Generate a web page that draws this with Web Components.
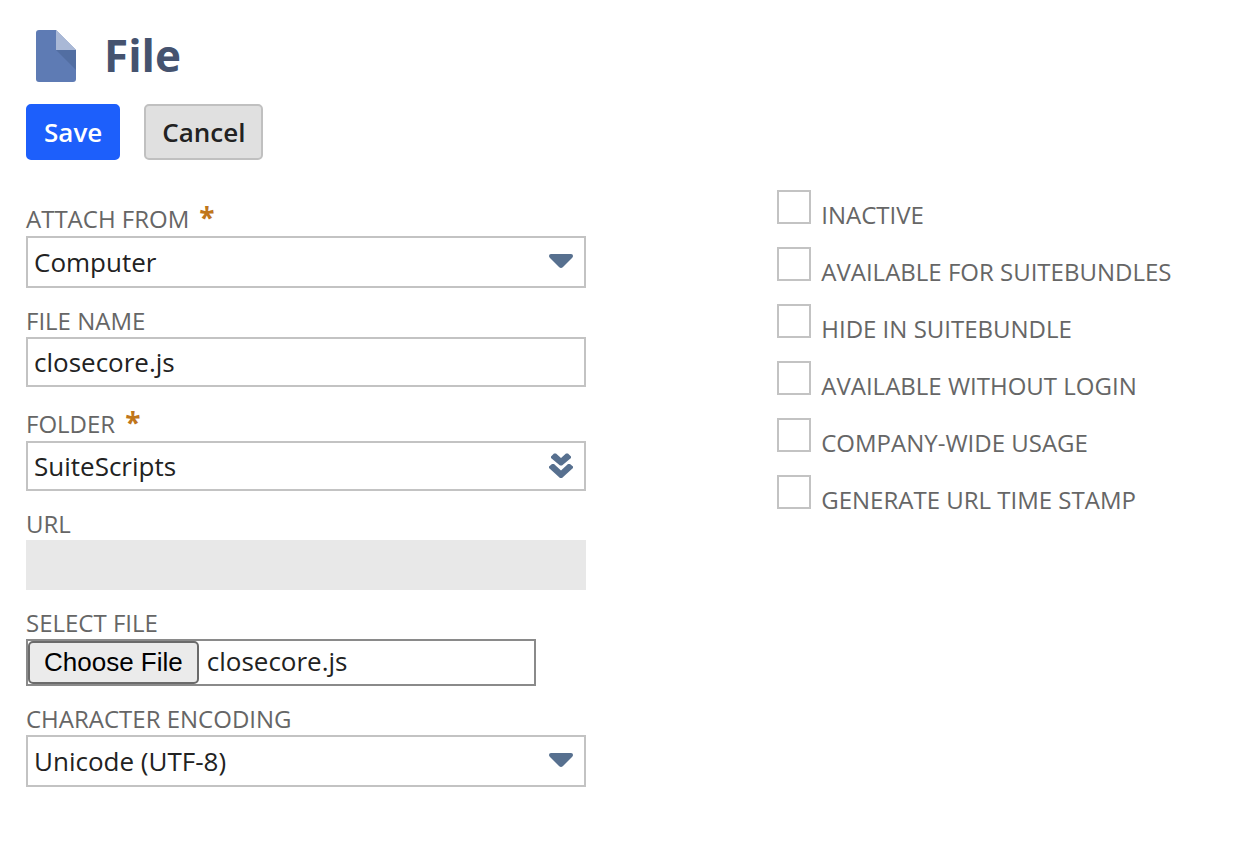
<!DOCTYPE html>
<html lang="en">
<head>
<meta charset="utf-8">
<meta name="viewport" content="width=device-width, initial-scale=1">
<title>File</title>
<style>
  body {
    margin: 0;
    background: #fff;
    font-family: "Open Sans", "Noto Sans", sans-serif;
    color: #222;
  }
</style>
</head>
<body>
<file-page>
  <page-title slot="title">File</page-title>
  <action-button slot="actions" kind="primary">Save</action-button>
  <action-button slot="actions">Cancel</action-button>

  <select-field slot="fields" label="ATTACH FROM" value="Computer" icon="arrow" required></select-field>
  <text-field slot="fields" label="FILE NAME" value="closecore.js"></text-field>
  <select-field slot="fields" label="FOLDER" value="SuiteScripts" icon="chevrons" required></select-field>
  <text-field slot="fields" label="URL" value="" readonly></text-field>
  <upload-field slot="fields" label="SELECT FILE" file="closecore.js"></upload-field>
  <select-field slot="fields" label="CHARACTER ENCODING" value="Unicode (UTF-8)" icon="arrow"></select-field>

  <check-field slot="options" label="INACTIVE"></check-field>
  <check-field slot="options" label="AVAILABLE FOR SUITEBUNDLES"></check-field>
  <check-field slot="options" label="HIDE IN SUITEBUNDLE"></check-field>
  <check-field slot="options" label="AVAILABLE WITHOUT LOGIN"></check-field>
  <check-field slot="options" label="COMPANY-WIDE USAGE"></check-field>
  <check-field slot="options" label="GENERATE URL TIME STAMP"></check-field>
</file-page>

<script>
  class BaseElement extends HTMLElement {
    constructor() {
      super();
      this.attachShadow({ mode: 'open' });
    }
    connectedCallback() {
      this.shadowRoot.innerHTML = this.render();
      this.ready();
    }
    ready() {}
  }

  class FilePage extends BaseElement {
    render() {
      return `
        <style>
          :host { display: block; padding: 30px 26px; }
          .actions { display: flex; gap: 24px; margin-top: 22px; }
          .columns { display: grid; grid-template-columns: 43fr 25fr; margin-top: 30px; }
          .fields { display: flex; flex-direction: column; gap: 17px; padding-top: 9px; }
          .options { display: flex; flex-direction: column; gap: 16px; }
          @media (max-width: 900px) { .columns { grid-template-columns: 1fr; gap: 24px; } }
        </style>
        <header>
          <slot name="title"></slot>
          <div class="actions"><slot name="actions"></slot></div>
        </header>
        <main class="columns">
          <div class="fields"><slot name="fields"></slot></div>
          <div class="options"><slot name="options"></slot></div>
        </main>`;
    }
  }

  class PageTitle extends BaseElement {
    render() {
      return `
        <style>
          :host { display: flex; align-items: flex-start; gap: 28px; padding-left: 10px; }
          svg { display: block; flex: none; }
          h1 { margin: 0; font-size: 44px; line-height: 50px; font-weight: 700; color: #45536f; }
        </style>
        <svg width="40" height="52" viewBox="0 0 40 52" aria-hidden="true">
          <path d="M3 0H20L40 20V49Q40 52 37 52H3Q0 52 0 49V3Q0 0 3 0Z" fill="#5e7bb4"/>
          <path d="M20 20H40V40Z" fill="#526ea2"/>
          <path d="M20 0L40 20H20Z" fill="#a9b8d6"/>
        </svg>
        <h1><slot></slot></h1>`;
    }
  }

  class ActionButton extends BaseElement {
    render() {
      return `
        <style>
          :host { display: block; }
          button {
            display: block; height: 56px; padding: 0 16px;
            border: 2px solid #c0c0c0; border-radius: 5px;
            background: #e0e0e0; color: #222;
            font-family: inherit; font-size: 26px; line-height: 36px; font-weight: 600;
          }
          :host([kind="primary"]) button { background: #1d5ffb; border-color: #1d5ffb; color: #fff; }
        </style>
        <button type="button"><slot></slot></button>`;
    }
  }

  const fieldStyles = `
    :host { display: block; max-width: 560px; }
    label { display: block; font-size: 24px; line-height: 32px; color: #666; }
    :host([required]) label { padding-top: 2px; line-height: 35px; }
    .star { margin-left: 10px; color: #c0761b; font-size: 28px; line-height: 24px; font-weight: 700; }
    input, select {
      display: block; box-sizing: border-box; width: 100%; height: 50px; margin: 0; padding: 0 6px;
      border: 2px solid #c3c3c3; border-radius: 0; background: #fff; color: #222;
      font-family: inherit; font-size: 26px;
    }`;

  class FormField extends BaseElement {
    get labelMarkup() {
      const star = this.hasAttribute('required') ? '<span class="star">*</span>' : '';
      return `<label for="control">${this.getAttribute('label')}${star}</label>`;
    }
  }

  class TextField extends FormField {
    render() {
      return `
        <style>${fieldStyles}
          input:read-only { background: #e8e8e8; border-color: #e8e8e8; }
        </style>
        ${this.labelMarkup}
        <input id="control" type="text" value="${this.getAttribute('value')}"${this.hasAttribute('readonly') ? ' readonly' : ''}>`;
    }
  }

  const icons = {
    arrow: `<path d="M2 6H22Q24 6 24 8Q24 9 23 10L14 19Q12 21 10 19L1 10Q0 9 0 8Q0 6 2 6Z" fill="#57708f"/>`,
    chevrons: `<path fill="#57708f" d="M2 3.500L5 0.500H7L12 5L17 0.500H19L22 3.500V5L13 12.500H11L2 5Z
                 M0 13.500L3 11H5L12 17.500L19 11H21L24 13.500V15L13 25H11L0 15Z"/>`
  };

  class SelectField extends FormField {
    render() {
      return `
        <style>${fieldStyles}
          .box { position: relative; }
          select { appearance: none; padding-right: 48px; }
          :host([icon="arrow"]) select { height: 52px; }
          svg { position: absolute; right: 13px; top: 12px; pointer-events: none; }
        </style>
        ${this.labelMarkup}
        <div class="box">
          <select id="control"><option>${this.getAttribute('value')}</option></select>
          <svg width="24" height="26" viewBox="0 0 24 26" aria-hidden="true">${icons[this.getAttribute('icon')]}</svg>
        </div>`;
    }
  }

  class UploadField extends FormField {
    render() {
      return `
        <style>${fieldStyles}
          input { max-width: 510px; height: 47px; padding: 0; border-color: #8a8a8a; }
          input::file-selector-button {
            box-sizing: border-box; height: 43px; margin: 0 8px 0 0; padding: 0 14px;
            border: 2px solid #6b6b6b; border-radius: 5px; background: #ebebeb; color: #000;
            font-family: "Liberation Sans", Arial, sans-serif; font-size: 26px;
          }
        </style>
        ${this.labelMarkup}
        <input id="control" type="file">`;
    }
    ready() {
      const transfer = new DataTransfer();
      transfer.items.add(new File([''], this.getAttribute('file'), { type: 'text/javascript' }));
      this.shadowRoot.querySelector('input').files = transfer.files;
    }
  }

  class CheckField extends BaseElement {
    render() {
      return `
        <style>
          :host { display: flex; align-items: baseline; gap: 10px; }
          input {
            appearance: none; flex: none; box-sizing: border-box; width: 34px; height: 34px; margin: 0;
            border: 2px solid #c3c3c3; background: #fff;
          }
          input:checked { background: #57708f; }
          label { font-size: 24px; line-height: 32px; color: #666; }
        </style>
        <input id="control" type="checkbox">
        <label for="control">${this.getAttribute('label')}</label>`;
    }
  }

  customElements.define('file-page', FilePage);
  customElements.define('page-title', PageTitle);
  customElements.define('action-button', ActionButton);
  customElements.define('text-field', TextField);
  customElements.define('select-field', SelectField);
  customElements.define('upload-field', UploadField);
  customElements.define('check-field', CheckField);
</script>
</body>
</html>
